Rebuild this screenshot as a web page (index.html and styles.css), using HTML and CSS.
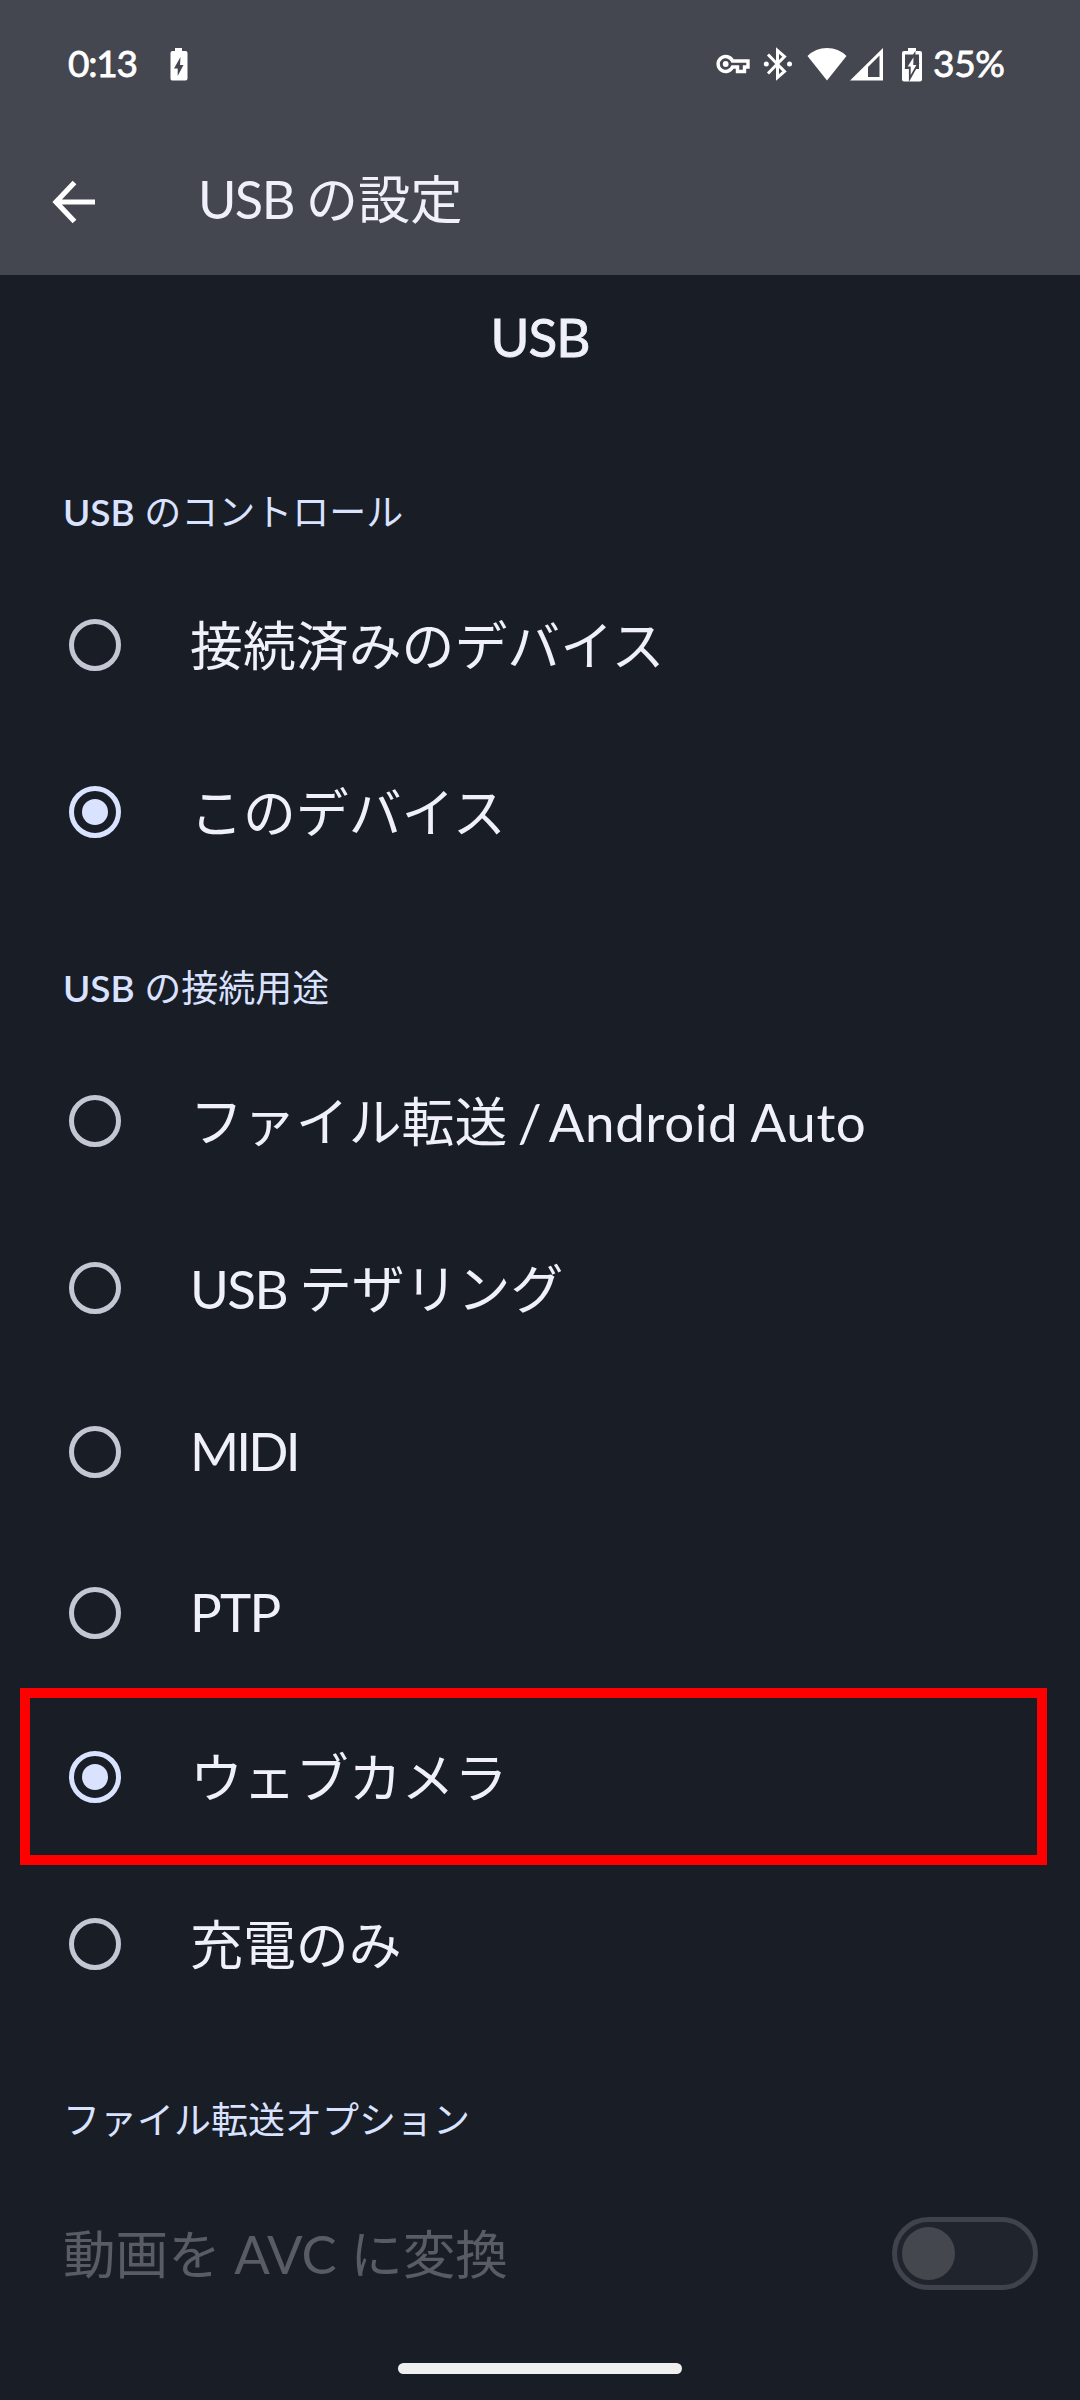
FILE: index.html
```html
<!DOCTYPE html>
<html lang="ja">
<head>
<meta charset="utf-8">
<title>USB の設定</title>
<link rel="stylesheet" href="styles.css">
</head>
<body>
<div class="screen">
  <header class="top">
    <div class="status">
      <span class="clock">0:13</span>
      <svg class="charge" width="18" height="34" viewBox="0 0 18 34"><path fill="#fff" fill-rule="evenodd" d="M5 1h7v3h3.500q2 0 2 2v25.500q0 2-2 2h-13.500q-1.500 0-1.500-2v-25.500q0-2 2-2h2.500zM10.500 10L4 21.500h3.700V29L13.500 18h-3.500z"/></svg>
      <div class="indicators">
        <svg class="key" width="34" height="22" viewBox="0 0 34 22"><path fill="none" stroke="#fff" stroke-width="3.400" stroke-linejoin="miter" d="M16.500 8h15.500v6h-3.500v4.500h-7v-4.500h-5a7.500 7.500 0 1 1 0-6z"/><circle cx="9.700" cy="11" r="2.900" fill="#fff"/></svg>
        <svg class="bt" width="30" height="34" viewBox="0 0 30 34"><path fill="none" stroke="#fff" stroke-width="3" d="M5 7.500L21.500 24.500L14.500 30.500V3.500L21.500 9.500L5 26.500"/><circle cx="3.300" cy="17" r="2.500" fill="#fff"/><circle cx="26.500" cy="17" r="2.500" fill="#fff"/></svg>
        <svg class="wifi" width="40" height="34" viewBox="0 0 40 34"><path fill="#fff" d="M20 33.500L.500 9Q8.500 1 20 1t19.500 8z"/></svg>
        <svg class="signal" width="34" height="34" viewBox="0 0 34 34"><path fill="#fff" fill-rule="evenodd" d="M0 33.500L33 1v32.500zM18 20v10h11.500V8.500z"/></svg>
        <svg class="battery" width="20" height="35" viewBox="0 0 20 35"><path fill="#fff" fill-rule="evenodd" d="M6 1h8v3h4q2 0 2 2v26.500q0 2-2 2h-16q-2 0-2-2v-26.500q0-2 2-2h4zM3 7.500v14.500h14v-14.500z"/><path fill="#fff" stroke="#44474f" stroke-width="1.800" d="M12.500 7L4 20.500H7.800V31.500L16 17H12.200z"/></svg>
        <span class="percent">35%</span>
      </div>
    </div>
    <div class="appbar">
      <svg class="back" width="44" height="44" viewBox="0 0 44 44"><path fill="none" stroke="#fff" stroke-width="5.200" d="M22.500 2.500L4 22L22.500 41.500M4 22H43"/></svg>
      <h1 class="title"><span class="usb">USB </span>の設定</h1>
    </div>
  </header>
  <main>
    <div class="hero">USB</div>

    <h2 class="section"><b>USB</b> のコントロール</h2>
    <div class="row"><i class="radio"></i><span>接続済みのデバイス</span></div>
    <div class="row"><i class="radio on"></i><span>このデバイス</span></div>

    <h2 class="section"><b>USB</b> の接続用途</h2>
    <div class="row"><i class="radio"></i><span>ファイル転送<span class="slash"> / </span><span class="auto">Android Auto</span></span></div>
    <div class="row"><i class="radio"></i><span><span class="usb">USB </span>テザリング</span></div>
    <div class="row latin"><i class="radio"></i><span class="midi">MIDI</span></div>
    <div class="row latin"><i class="radio"></i><span class="ptp">PTP</span></div>
    <div class="row marked"><i class="radio on"></i><span>ウェブカメラ</span></div>
    <div class="row"><i class="radio"></i><span>充電のみ</span></div>

    <h2 class="section">ファイル転送オプション</h2>
    <div class="row disabled"><span>動画を AVC に変換</span><i class="switch"></i></div>
  </main>
  <footer class="nav"><i class="pill"></i></footer>
</div>
</body>
</html>
```
FILE: styles.css
```css
*, *::before, *::after { box-sizing: border-box; }
body { margin: 0; background: #191d25; font-family: Lato, "Noto Sans CJK JP", sans-serif; }
h1, h2 { margin: 0; font-weight: 400; }
svg, i { display: block; flex: none; }
.screen { width: 1080px; height: 2400px; display: flex; flex-direction: column; background: #191d25; color: #eff0fb; }

.top { height: 275px; background: #44474f; }
.status { height: 128px; padding: 0 76px 0 68px; display: flex; align-items: center; color: #fff; font-size: 37px; -webkit-text-stroke: 0.8px currentColor; }
.clock { width: 102px; line-height: 50px; padding-bottom: 2px; letter-spacing: -1.2px; }
.indicators { margin-left: auto; display: flex; align-items: center; }
.bt { margin-left: 13px; }
.wifi { margin-left: 14px; }
.signal { margin-left: 3px; }
.battery { margin-left: 18px; }
.percent { width: 71px; margin-left: 11px; padding-bottom: 2px; line-height: 50px; letter-spacing: -0.3px; white-space: nowrap; }

.appbar { height: 147px; padding-left: 52px; display: flex; align-items: center; }
.title { margin-left: 102px; padding-bottom: 5px; font-size: 52.3px; line-height: 80px; white-space: nowrap; }
.usb { letter-spacing: -1.6px; }

.hero { height: 144.5px; padding-top: 22px; text-align: center; font-size: 53px; line-height: 80px; letter-spacing: -1px; -webkit-text-stroke: 0.9px currentColor; }
.section { height: 142px; padding: 65.5px 0 0 63px; font-size: 37px; line-height: 54px; color: #d9e2ff; white-space: nowrap; }
.section b { font-weight: 600; }
.row { height: 167px; padding-left: 69px; display: flex; align-items: center; font-size: 52.9px; line-height: 80px; white-space: nowrap; }
.row > span { padding-top: 2px; }
.row.latin { height: 161px; }
.latin > span { padding: 0 0 3px; }
.midi { letter-spacing: -2.8px; }
.ptp { letter-spacing: -1.8px; }
.slash { letter-spacing: -3.2px; }
.auto { letter-spacing: 0.6px; }
.radio { width: 52px; height: 52px; margin-right: 69px; border: 5.25px solid #c4c6d3; border-radius: 50%; display: grid; place-items: center; }
.radio.on { border-color: #d9e2ff; }
.radio.on::after { content: ""; width: 26px; height: 26px; border-radius: 50%; background: #d9e2ff; }
.marked { position: relative; }
.marked::before { content: ""; position: absolute; left: 20px; top: -5.5px; width: 1027px; height: 177px; border: 10px solid #f00; }

.disabled { padding: 0 42px 0 63px; justify-content: space-between; font-size: 52.6px; color: #595c63; }
.switch { width: 146px; height: 73px; padding: 5px; border: 5px solid #40434c; border-radius: 37px; background: #20242c; }
.switch::before { content: ""; display: block; width: 53px; height: 53px; border-radius: 50%; background: #44474e; }

.nav { margin-top: auto; height: 37px; }
.pill { width: 284px; height: 11px; margin: 0 auto; border-radius: 6px; background: #f0eff0; }
```
